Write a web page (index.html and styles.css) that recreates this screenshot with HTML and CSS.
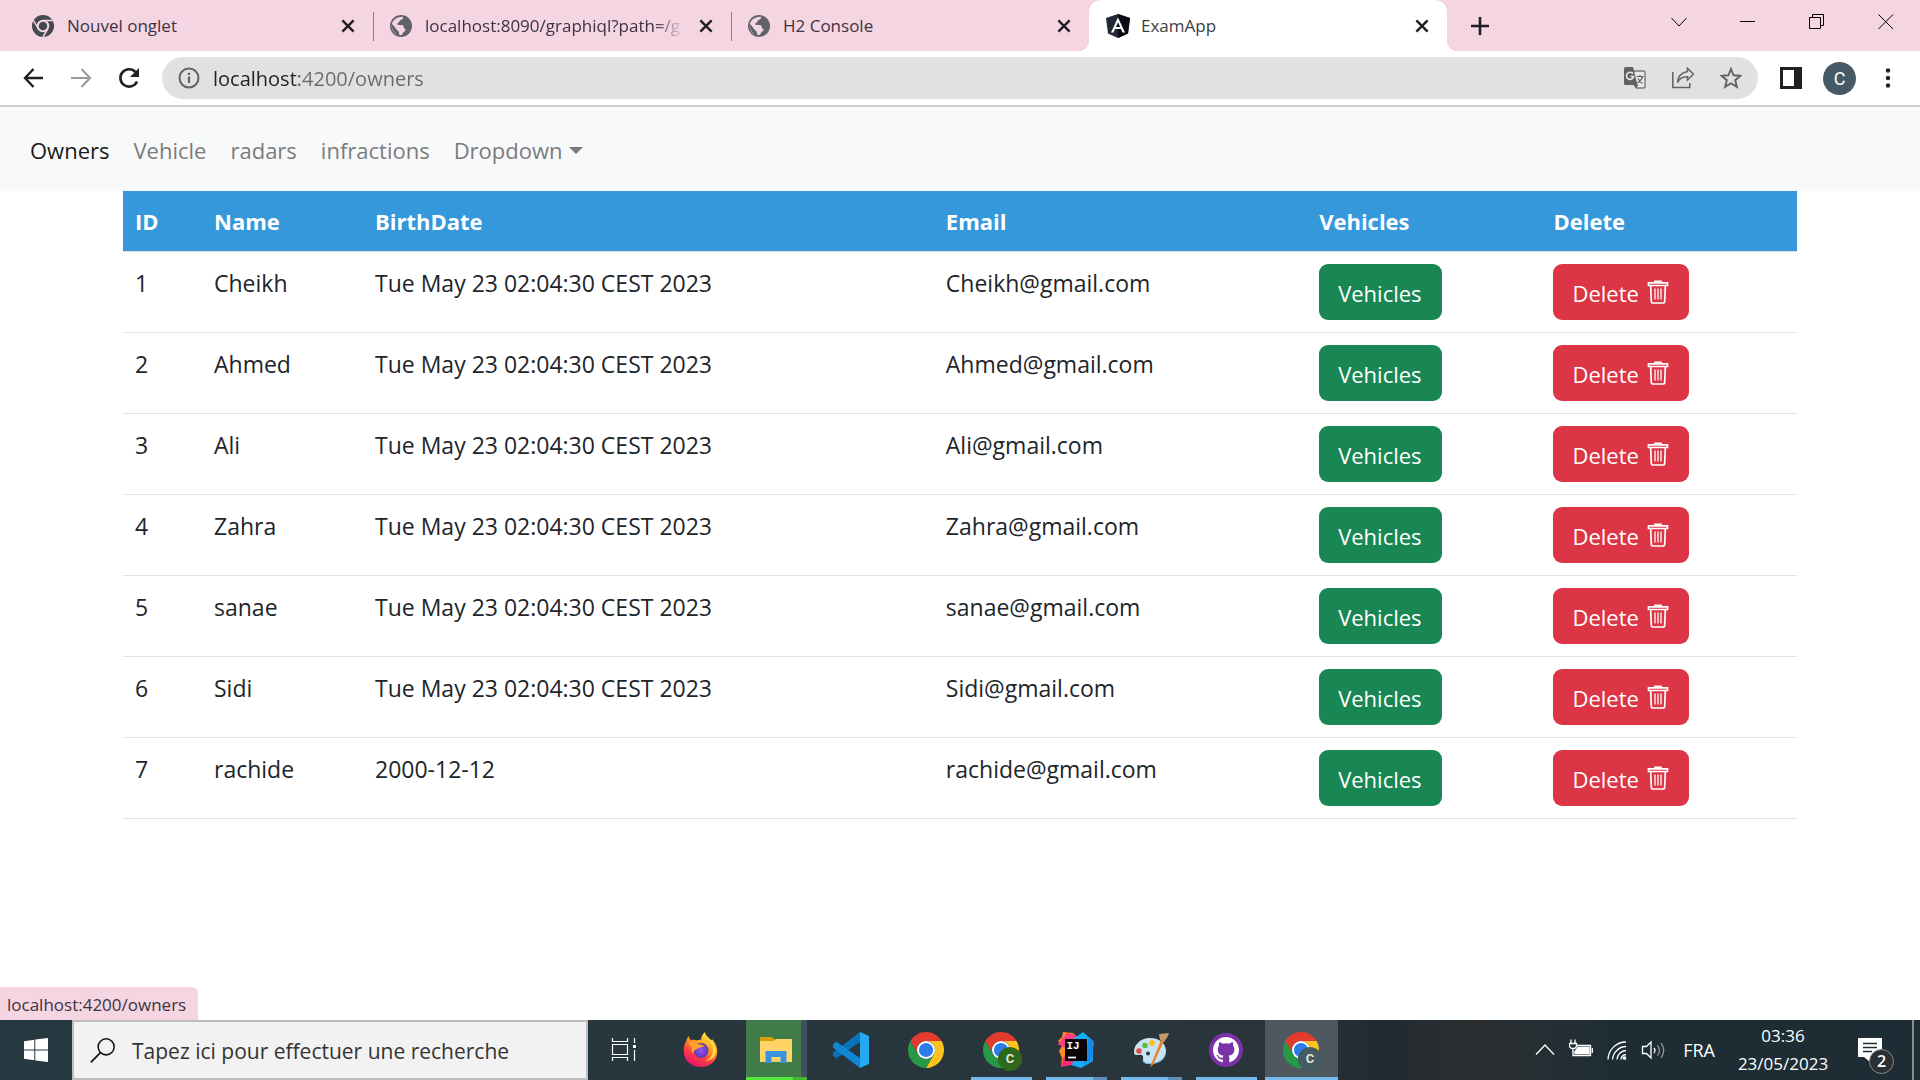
FILE: index.html
```
<!DOCTYPE html>
<html lang="fr">
<head>
<meta charset="utf-8">
<title>ExamApp</title>
<link rel="stylesheet" href="styles.css">
</head>
<body>
<svg class="defs" aria-hidden="true">
  <symbol id="x" viewBox="0 0 16 16"><path d="M3 3l10 10M13 3L3 13" stroke="currentColor" stroke-width="2.2" fill="none"/></symbol>
  <symbol id="globe" viewBox="0 0 24 24"><circle cx="12" cy="12" r="12" fill="#5f6368"/><path d="M14 1.800c1 2-1 3-2.500 3.700C10 6.500 10.500 8 9 8.500 7.500 9 7.500 10.500 9 11h4c1.500 0 2 1.500 2 2.500 0 1.500 2 1 2 2.500 0 2-2.500 2-3 4-.5 1.500-2 2.500-3.500 1.800C9.500 20 10 18.500 9 17.500 8 16.500 6 15 5.500 13.500L2 9.500C1.500 15 4 20 9 22 4 20.500 1.500 16.500 1.800 11 2.500 6 7 1.500 14 1.800z" fill="#f6d5e3"/></symbol>
  <symbol id="chrome" viewBox="-22 -22 44 44"><path d="M0-11H19.050A22 22 0 0 0-19.050-11L-9.530 5.500A11 11 0 0 1 0-11z" fill="#e33b2e"/><path d="M19.050-11A22 22 0 0 1 0 22L9.530 5.500A11 11 0 0 0 0-11z" fill="#fcc31e"/><path d="M0 22A22 22 0 0 1-19.050-11L-9.530 5.500A11 11 0 0 0 9.530 5.500z" fill="#279847"/><circle r="11" fill="#fff"/><circle r="8.700" fill="#2b7de9"/></symbol>
  <symbol id="trash" viewBox="0 0 22 24"><path d="M8 2.500V1.300h6v1.200M1.500 2.800h19v2.700h-19zM3.700 6l.6 15.200q.1 1.800 1.800 1.800h9.800q1.700 0 1.800-1.800L18.300 6" fill="none" stroke="currentColor" stroke-width="1.700"/><path d="M8 8.500v11M11 8.500v11M14 8.500v11" stroke="currentColor" stroke-width="1.300"/></symbol>
</svg>

<header class="browser">
  <div class="tabstrip">
    <div class="tab">
      <svg class="favicon" viewBox="-22 -22 44 44"><circle r="22" fill="#45494d"/><path d="M0-11H19M-9.530 5.500L-19-11M9.530 5.500L0 22" stroke="#f6d5e3" stroke-width="3"/><circle r="10.500" fill="#45494d" stroke="#f6d5e3" stroke-width="4"/></svg>
      <span class="tab-title">Nouvel onglet</span>
      <button class="tab-close" aria-label="Fermer"><svg><use href="#x"/></svg></button>
    </div>
    <div class="tab divided">
      <svg class="favicon"><use href="#globe"/></svg>
      <span class="tab-title faded">localhost:8090/graphiql?path=/g</span>
      <button class="tab-close" aria-label="Fermer"><svg><use href="#x"/></svg></button>
    </div>
    <div class="tab divided">
      <svg class="favicon"><use href="#globe"/></svg>
      <span class="tab-title">H2 Console</span>
      <button class="tab-close" aria-label="Fermer"><svg><use href="#x"/></svg></button>
    </div>
    <div class="tab active">
      <svg class="favicon angular" viewBox="0 0 24 24"><path d="M12 0l12 4-2 15.500L12 24 2 19.500 0 4z" fill="#242834"/><path d="M12 0l12 4-2 15.500L12 24z" fill="#080a14"/><path d="M12 3.500L5 18.500h2.600l1.300-3.400h6.200l1.300 3.400H19zM12 8.300l2.200 4.800H9.800z" fill="#fff" fill-rule="evenodd"/></svg>
      <span class="tab-title">ExamApp</span>
      <button class="tab-close" aria-label="Fermer"><svg><use href="#x"/></svg></button>
    </div>
    <button class="new-tab" aria-label="Nouvel onglet"><svg viewBox="0 0 18 18"><path d="M9 0v18M0 9h18" stroke="#1e1e22" stroke-width="2.600"/></svg></button>
    <div class="window-controls">
      <button aria-label="Rechercher dans les onglets"><svg viewBox="0 0 16 16"><path d="M.5 4l7.500 8 7.500-8" /></svg></button>
      <button aria-label="Réduire"><svg viewBox="0 0 16 16"><path d="M0 7.500h15"/></svg></button>
      <button aria-label="Restaurer"><svg viewBox="0 0 16 16"><path d="M.5 3.500h11v11H.5zM3.500 3.500V.5h11v11h-3"/></svg></button>
      <button aria-label="Fermer la fenêtre"><svg viewBox="0 0 16 16"><path d="M.5.5l14.500 14.500M15 .5L.5 15"/></svg></button>
    </div>
  </div>
  <div class="toolbar">
    <div class="history">
      <button aria-label="Retour"><svg viewBox="0 0 24 24"><path d="M22 12H4M12.500 3L4 12l8.500 9" fill="none" stroke="#202124" stroke-width="2.400"/></svg></button>
      <button aria-label="Suivant"><svg viewBox="0 0 24 24"><path d="M2 12h19M12.500 3l8.500 9-8.500 9" fill="none" stroke="#9b9b9d" stroke-width="2.200"/></svg></button>
      <button aria-label="Actualiser"><svg viewBox="0 0 24 24"><path d="M20 15.500A8.700 8.700 0 1 1 18.500 6" fill="none" stroke="#202124" stroke-width="2.600"/><path d="M22 2v9h-9z" fill="#202124"/></svg></button>
    </div>
    <div class="omnibox">
      <svg viewBox="0 0 22 22"><circle cx="11" cy="11" r="9.500" fill="none" stroke="#5f6368" stroke-width="2"/><path d="M11 9.500v6.500M11 5.800v2.200" stroke="#5f6368" stroke-width="2.200"/></svg>
      <input class="url" type="text" value="localhost:4200/owners" aria-label="Adresse">
      <button aria-label="Traduire"><svg viewBox="0 0 22 22"><path d="M9 4h10.500q1.500 0 1.500 1.500v14q0 1.500-1.500 1.500H12.500L9.500 17z" fill="#e8e8e8" stroke="#77797c" stroke-width="1.400"/><path d="M1.500 0H9l4.500 18h-12Q0 18 0 16.500v-15Q0 0 1.500 0z" fill="#5f6368"/><path d="M10.500 18h4l-3 3.500z" fill="#5f6368"/><path d="M9 6.700A3.600 3.600 0 1 0 9.600 9.500H6.500" fill="none" stroke="#e8e8e8" stroke-width="1.600"/><path d="M12.500 9.500h7M16 8v1.500M18.500 9.500q-1 4-5 6.500M14 11.500q1.500 3 4.500 5" fill="none" stroke="#5f6368" stroke-width="1.200"/></svg></button>
      <button aria-label="Partager"><svg viewBox="0 0 22 22"><path d="M.8 5v15.500h17V16M15.500 1.200L21.500 7l-6 6V9.800Q8.500 9.500 5.500 15.500 6 6.500 15.500 4.500z" fill="none" stroke="#5f6368" stroke-width="1.500"/></svg></button>
      <button aria-label="Ajouter aux favoris"><svg viewBox="0 0 22 22"><path d="M11 2l2.600 6.300 6.900.5-5.300 4.400 1.700 6.700L11 16.300 5.100 19.900l1.700-6.700L1.500 8.800l6.900-.5z" fill="none" stroke="#5f6368" stroke-width="1.900"/></svg></button>
    </div>
    <div class="toolbar-end">
      <button aria-label="Panneau latéral"><svg viewBox="0 0 22 22"><path d="M0 0h22v22H0z" fill="#202124"/><path d="M3 3h11v16H3z" fill="#fff"/></svg></button>
      <button class="avatar">C</button>
      <button aria-label="Menu"><svg viewBox="0 0 22 22"><g fill="#202124"><circle cx="11" cy="3.500" r="2.200"/><circle cx="11" cy="11" r="2.200"/><circle cx="11" cy="18.500" r="2.200"/></g></svg></button>
    </div>
  </div>
</header>

<div class="page">
  <nav class="navbar">
    <a class="current" href="#">Owners</a>
    <a href="#">Vehicle</a>
    <a href="#">radars</a>
    <a href="#">infractions</a>
    <a class="dropdown" href="#">Dropdown</a>
  </nav>
  <main class="container">
    <table class="owners">
      <colgroup><col class="c-id"><col class="c-name"><col class="c-birth"><col class="c-email"><col class="c-vehicles"><col class="c-delete"></colgroup>
      <thead>
        <tr><th>ID</th><th>Name</th><th>BirthDate</th><th>Email</th><th>Vehicles</th><th>Delete</th></tr>
      </thead>
      <tbody>
        <tr><td>1</td><td>Cheikh</td><td>Tue May 23 02:04:30 CEST 2023</td><td>Cheikh@gmail.com</td><td><button class="btn success">Vehicles</button></td><td><button class="btn danger">Delete <svg><use href="#trash"/></svg></button></td></tr>
        <tr><td>2</td><td>Ahmed</td><td>Tue May 23 02:04:30 CEST 2023</td><td>Ahmed@gmail.com</td><td><button class="btn success">Vehicles</button></td><td><button class="btn danger">Delete <svg><use href="#trash"/></svg></button></td></tr>
        <tr><td>3</td><td>Ali</td><td>Tue May 23 02:04:30 CEST 2023</td><td>Ali@gmail.com</td><td><button class="btn success">Vehicles</button></td><td><button class="btn danger">Delete <svg><use href="#trash"/></svg></button></td></tr>
        <tr><td>4</td><td>Zahra</td><td>Tue May 23 02:04:30 CEST 2023</td><td>Zahra@gmail.com</td><td><button class="btn success">Vehicles</button></td><td><button class="btn danger">Delete <svg><use href="#trash"/></svg></button></td></tr>
        <tr><td>5</td><td>sanae</td><td>Tue May 23 02:04:30 CEST 2023</td><td>sanae@gmail.com</td><td><button class="btn success">Vehicles</button></td><td><button class="btn danger">Delete <svg><use href="#trash"/></svg></button></td></tr>
        <tr><td>6</td><td>Sidi</td><td>Tue May 23 02:04:30 CEST 2023</td><td>Sidi@gmail.com</td><td><button class="btn success">Vehicles</button></td><td><button class="btn danger">Delete <svg><use href="#trash"/></svg></button></td></tr>
        <tr><td>7</td><td>rachide</td><td>2000-12-12</td><td>rachide@gmail.com</td><td><button class="btn success">Vehicles</button></td><td><button class="btn danger">Delete <svg><use href="#trash"/></svg></button></td></tr>
      </tbody>
    </table>
  </main>
  <div class="status">localhost:4200/owners</div>
</div>

<footer class="taskbar">
  <button class="start" aria-label="Démarrer"><svg viewBox="0 0 24 24"><path d="M0 3.300L10.300 1.700V11.500H0zM11.300 1.500L24 0v11.500H11.300zM0 12.500h10.300v9.800L0 20.700zM11.300 12.500H24V24l-12.700-1.500z" fill="#fff"/></svg></button>
  <label class="search">
    <svg viewBox="0 0 24 24"><circle cx="15.500" cy="8.500" r="7.700" fill="none" stroke="#111" stroke-width="1.500"/><path d="M10 14L.8 23.300" stroke="#111" stroke-width="1.700"/></svg>
    <input type="text" placeholder="Tapez ici pour effectuer une recherche" aria-label="Recherche">
  </label>
  <div class="apps">
    <button class="app" aria-label="Vue des tâches"><svg viewBox="0 0 36 36"><path d="M4.500 6v3.500h15V6M4.500 12.500h15v10h-15zM4.500 29v-3.500h15V29M26.500 6v5M26.500 18v11" fill="none" stroke="#fff" stroke-width="1.200"/><path d="M25 13h3v3h-3z" fill="#fff"/></svg></button>
    <button class="app" aria-label="Firefox"><svg viewBox="0 0 36 36">
      <defs><linearGradient id="ff" x1=".8" y1="0" x2=".3" y2="1"><stop offset="0" stop-color="#fff44f"/><stop offset=".4" stop-color="#ffa01e"/><stop offset=".7" stop-color="#ff3b45"/><stop offset="1" stop-color="#e3126e"/></linearGradient><radialGradient id="ffg"><stop offset="0" stop-color="#9a50f0"/><stop offset="1" stop-color="#5b39b6"/></radialGradient></defs>
      <path d="M22 0c0 3 3 5 6 8l1.500-.5c4 5 6 11 4 17-2 6-8 10.500-16 10.500S3 30 1.500 24C0 18 1 12 3.500 9c0-2 1-4 2.500-5 0 2 1 3.500 2 4.200 2-.7 4-.5 5.500.2C15 8 17 7.500 18 8c0-3 1.500-6 4-8z" fill="url(#ff)"/><path d="M24 4c1.500 5 6 7 6 14 0 6-4 10-9 11 8 0 12.500-5 12-12C32 11 27 8 24 4z" fill="#ffd94a"/><circle cx="18" cy="18.500" r="7.500" fill="url(#ffg)"/><path d="M6 11c4-2 7-1 9 1 2 1 5 0 7 3-3-1-5 1-8 2-3 1-4 3-3 5-2-1-3-3-2-6-1-2-3-3-3-5z" fill="#ffa22c"/></svg></button>
    <button class="app explorer stacked" aria-label="Explorateur de fichiers"><svg viewBox="0 0 36 36"><path d="M2 5h12l3 3h17v22H2z" fill="#dc9c07"/><path d="M2 9h13l3-2h16v23H2z" fill="#ffd466"/><path d="M7.500 31V19h21v12h-6v-6h-9v6z" fill="#3a93dd"/></svg></button>
    <button class="app" aria-label="Visual Studio Code"><svg viewBox="0 0 36 36"><path d="M27 0v10L3 26.500 0 23.500v-3z" fill="#0873b8"/><path d="M0 12.500L3 9.500 27 26v10L0 15.500z" fill="#1087d5"/><path d="M27 0l9 4v28l-9 4z" fill="#28a8f2"/></svg></button>
    <button class="app" aria-label="Google Chrome"><svg><use href="#chrome"/></svg></button>
    <button class="app open" aria-label="Google Chrome"><svg><use href="#chrome"/></svg><span class="profile green">C</span></button>
    <button class="app open stacked" aria-label="IntelliJ IDEA"><svg viewBox="0 0 36 36"><path d="M5 0l10 1 6 8-13 18-5 8 1-9-3-7 3-5-4-5 4-4z" fill="#ff8a22"/><path d="M9 1l9 2 3 9-14 4-7-4z" fill="#ff3c82"/><path d="M15 7L25 0l10 9v20l-12 7-10-3z" fill="#12aef7"/><path d="M31 5l5 5-2 18-8 4z" fill="#1689e8"/><path d="M3 35l3-11 11 4-4 5z" fill="#f72a72"/><path d="M7 7h22v22H7z" fill="#080307"/><path d="M10 25.500h8" stroke="#fff" stroke-width="1.700"/><text x="8.500" y="17" class="ij">IJ</text></svg></button>
    <button class="app open stacked" aria-label="Paint"><svg viewBox="0 0 36 36"><path d="M17 6C7 6 1 13 1 20c0 4 3 3 5 3 3-1 5 1 4 4-1 3 2 5 7 5 10 0 16-6 16-13S27 6 17 6z" fill="#c7e4f4"/><path d="M17 31c9 0 15-5 16-11-1 8-7 12-16 12-5 0-8-2-7-5 1 3 3 4 7 4z" fill="#79b9df"/><circle cx="6" cy="19" r="2.800" fill="#e04c42"/><circle cx="12" cy="13.500" r="2.800" fill="#5cba45"/><circle cx="19" cy="11" r="3" fill="#fbbf20"/><circle cx="15" cy="21.500" r="2" fill="#26363e"/><path d="M28 8L17 35l3-2L31 9z" fill="#e88527"/><path d="M26 2l10-1-1 3-4 6-4-2z" fill="#c49a6c"/></svg></button>
    <button class="app open" aria-label="GitHub Desktop"><svg viewBox="0 0 36 36"><circle cx="18" cy="18" r="17" fill="#7d31a8"/><g transform="translate(5 5) scale(1.625)"><path d="M8 0C3.580 0 0 3.580 0 8c0 3.540 2.290 6.530 5.470 7.590.4.070.55-.17.55-.38v-1.490c-2.010.37-2.530-.49-2.690-.94-.09-.23-.48-.94-.82-1.130-.28-.15-.68-.52-.01-.53.63-.01 1.080.58 1.230.82.72 1.210 1.870.87 2.330.66.070-.52.28-.87.51-1.070-1.780-.2-3.640-.89-3.640-3.950 0-.87.31-1.590.82-2.150-.08-.2-.36-1.020.08-2.120 0 0 .67-.21 2.200.82a7.700 7.700 0 0 1 4 0c1.530-1.040 2.200-.82 2.200-.82.44 1.100.16 1.920.08 2.120.51.56.82 1.270.82 2.150 0 3.070-1.870 3.750-3.650 3.950.29.25.54.73.54 1.480v2.190c0 .21.15.46.55.38A8 8 0 0 0 16 8c0-4.420-3.580-8-8-8z" fill="#fff"/></g></svg></button>
    <button class="app focused" aria-label="Google Chrome"><svg><use href="#chrome"/></svg><span class="profile slate">C</span></button>
  </div>
  <div class="tray">
    <button aria-label="Icônes cachées"><svg viewBox="0 0 24 24"><path d="M3 16.500L12 7l9 9.500"/></svg></button>
    <button aria-label="Batterie"><svg viewBox="0 0 24 24"><path d="M7.500 7.500h14v10H4v-4"/><path d="M9 9.500h11v6H6v-2z" fill="#fff"/><path d="M23.300 10v5M2 1.500v4M6 1.500v4M.5 5.500h7v2q0 3-3.500 3T.5 7.500zM4 10.500v4"/></svg></button>
    <button aria-label="Wi-Fi"><svg viewBox="0 0 24 24"><path d="M3 21.500A18 18 0 0 1 21 4M7.500 21.500A14 14 0 0 1 21 8.500M12 21.500A9.500 9.500 0 0 1 21 12.500M16 21.500q0-4 5-5"/><circle cx="19.500" cy="20" r="1.200" fill="#fff"/></svg></button>
    <button aria-label="Volume"><svg viewBox="0 0 24 24"><path d="M1.500 8.500h4L10 4v16l-4.500-4.500h-4z"/><path d="M13 10q2 2.500 0 5"/><path d="M16.500 7.500q4 5 0 10M20 5q5.500 7.500 0 15" opacity=".5"/></svg></button>
    <span class="lang">FRA</span>
    <div class="clock"><span>03:36</span><span>23/05/2023</span></div>
    <button class="notifications" aria-label="Notifications"><svg viewBox="0 0 24 24"><path d="M0 0h24v18H13l-1 6-6-5H0z" fill="#fff" stroke="none"/><path d="M5 5.500h14M5 9.500h14M5 13.500h9" stroke="#1f2d34"/></svg><span class="count">2</span></button>
    <span class="peek"></span>
  </div>
</footer>
</body>
</html>
```
FILE: styles.css
```
* { box-sizing: border-box; }
body {
  margin: 0;
  min-height: 100vh;
  display: flex;
  flex-direction: column;
  font-family: "Open Sans", "Noto Sans", sans-serif;
  color: #212529;
  background: #fff;
}
button { font: inherit; color: inherit; border: 0; padding: 0; margin: 0; background: none; }
input { font: inherit; border: 0; padding: 0; background: none; outline: 0; min-width: 0; }
svg { display: block; flex: none; }
.defs { position: absolute; width: 0; height: 0; }

/* Tab strip */
.tabstrip { display: flex; height: 51px; padding-left: 15px; background: #f6d5e3; }
.tab { position: relative; flex: 0 1 358px; min-width: 0; display: flex; align-items: center; gap: 13px; padding: 0 16px 0 17px; font-size: 17px; color: #3b3340; }
.divided::before { content: ""; position: absolute; left: 0; top: 12px; width: 1px; height: 29px; background: #8d7f88; }
.active { background: #fff; border-radius: 12px 12px 0 0; color: #3c4043; gap: 11px; }
.active::before, .active::after { content: ""; position: absolute; bottom: 0; width: 10px; height: 10px; }
.active::before { right: 100%; background: radial-gradient(circle at 0 0, #f6d5e3 10px, #fff 10px); }
.active::after { left: 100%; background: radial-gradient(circle at 100% 0, #f6d5e3 10px, #fff 10px); }
.favicon { width: 22px; height: 22px; }
.angular { width: 24px; height: 24px; }
.tab-title { flex: 1; min-width: 0; overflow: hidden; white-space: nowrap; }
.faded { -webkit-mask-image: linear-gradient(to left, transparent, #000 30px); mask-image: linear-gradient(to left, transparent, #000 30px); }
.tab-close { color: #202124; }
.tab-close svg { width: 18px; height: 18px; }
.new-tab { width: 66px; display: grid; place-items: center; }
.new-tab svg { width: 18px; height: 18px; }
.window-controls { display: flex; margin-left: auto; }
.window-controls button { width: 69px; height: 43px; display: grid; place-items: center; }
.window-controls svg { width: 16px; height: 16px; fill: none; stroke: #000; }

/* Toolbar */
.toolbar { display: flex; align-items: center; height: 56px; padding: 0 21px; border-bottom: 2px solid #cacbcd; }
.history { display: flex; gap: 24px; margin-right: 21px; }
.history svg { width: 24px; height: 24px; }
.omnibox { flex: 1; display: flex; align-items: center; gap: 26px; height: 42px; padding: 0 16px; border-radius: 21px; background: #e1e1e1; }
.omnibox svg { width: 22px; height: 22px; }
.url {
  flex: 1;
  margin-left: -13px;
  height: 32px;
  font-size: 20px;
  color: transparent;
  background: linear-gradient(to right, #202124 86px, #686a6d 86px);
  -webkit-background-clip: text;
  background-clip: text;
}
.toolbar-end { display: flex; align-items: center; gap: 21px; margin-left: 22px; }
.toolbar-end svg { width: 22px; height: 22px; }
.avatar { width: 33px; height: 33px; border-radius: 50%; background: #455a64; color: #fff; font-family: Roboto, sans-serif; font-size: 18px; }

/* Page */
.page { position: relative; flex: 1; }
.navbar { display: flex; align-items: center; gap: 24px; height: 84px; padding: 2px 30px 0; background: #f8f9fb; font-size: 22px; }
.navbar a { color: #7b7c7d; text-decoration: none; line-height: 36px; }
.navbar .current { color: #191a1a; }
.dropdown { display: flex; align-items: center; gap: 6px; }
.dropdown::after { content: ""; border: 7px solid transparent; border-top-color: currentColor; border-bottom: 0; }
.container { padding: 0 123px; }
.owners { width: 100%; table-layout: fixed; border-collapse: separate; border-spacing: 0; font-size: 23px; line-height: 38px; }
.owners th, .owners td { padding: 12px; text-align: left; vertical-align: top; border-bottom: 1px solid #dee2e6; }
.owners th { background: #3498db; color: #fff; font-size: 22px; font-weight: 700; line-height: 36px; }
.c-id { width: 79px; }
.c-name { width: 161px; }
.c-birth { width: 34.100%; }
.c-email { width: 22.300%; }
.c-vehicles { width: 14%; }
.btn { display: flex; align-items: center; gap: 8px; height: 56px; padding: 2px 20px 0 19px; border-radius: 9px; color: #fff; font-size: 22px; white-space: nowrap; }
.success { background: #198754; }
.danger { background: #dc3545; }
.btn svg { width: 22px; height: 24px; margin-bottom: 2px; }
.status { position: absolute; left: 0; bottom: 0; height: 33px; padding: 0 12px 0 7px; border-radius: 0 6px 0 0; background: #f6d5e3; font-size: 17px; line-height: 35px; color: #3b3340; }

/* Taskbar */
.taskbar { display: flex; height: 60px; background: linear-gradient(to right, #263840, #29353b 65%, #222a30 72%, #2b2f32 77%, #1e2d34 84%, #1e2d35); color: #fff; }
.start { width: 72px; display: grid; place-items: center; }
.start svg { width: 24px; height: 24px; }
.search { flex: 0 1 516px; display: flex; align-items: center; gap: 17px; padding: 0 16px; background: #f2f2f2; border: 2px solid #bcbec0; }
.search svg { width: 25px; height: 25px; }
.search input { flex: 1; height: 36px; padding-top: 2px; font-size: 21px; }
.search input::placeholder { color: #333; opacity: 1; }
.apps { display: flex; }
.app { position: relative; width: 75px; display: grid; place-items: center; }
.app svg { width: 36px; height: 36px; }
.open::after, .explorer::after, .focused::after { content: ""; position: absolute; left: 8px; right: 6px; bottom: 0; height: 3px; background: #76b9ed; }
.stacked::after { background: linear-gradient(to right, #76b9ed 47px, #5d91bb 47px); }
.explorer { background: linear-gradient(to right, transparent 8px, #417b49 8px 63px, #41515b 63px 69px, transparent 69px); }
.explorer::after { background: linear-gradient(to right, #54e83a 47px, #43b82f 47px); }
.focused { background: linear-gradient(to right, transparent 2px, #50585f 2px); }
.focused::after { left: 2px; right: 0; }
.profile { position: absolute; left: 35px; bottom: 9px; width: 24px; height: 24px; border-radius: 50%; font: 700 13px/24px Roboto, sans-serif; color: #e3e6dc; }
.green { background: #2f681b; }
.slate { background: #455a64; }
.ij { font: 700 11px "Liberation Mono", monospace; fill: #fff; }
.tray { display: flex; align-items: center; gap: 12px; margin-left: auto; }
.tray svg { width: 24px; height: 24px; fill: none; stroke: #fff; stroke-width: 1.300; }
.lang { margin-left: 6px; font-size: 18px; }
.clock { display: flex; flex-direction: column; width: 112px; text-align: center; font-size: 17px; line-height: 28px; }
.notifications { position: relative; margin-left: 7px; }
.count { position: absolute; left: 11px; top: 11px; width: 25px; height: 25px; border: 1px solid #888; border-radius: 50%; background: #2b3033; font-size: 16px; font-weight: 600; line-height: 23px; }
.peek { align-self: stretch; width: 8px; margin-left: 18px; border-left: 2px solid #858d91; }
```
